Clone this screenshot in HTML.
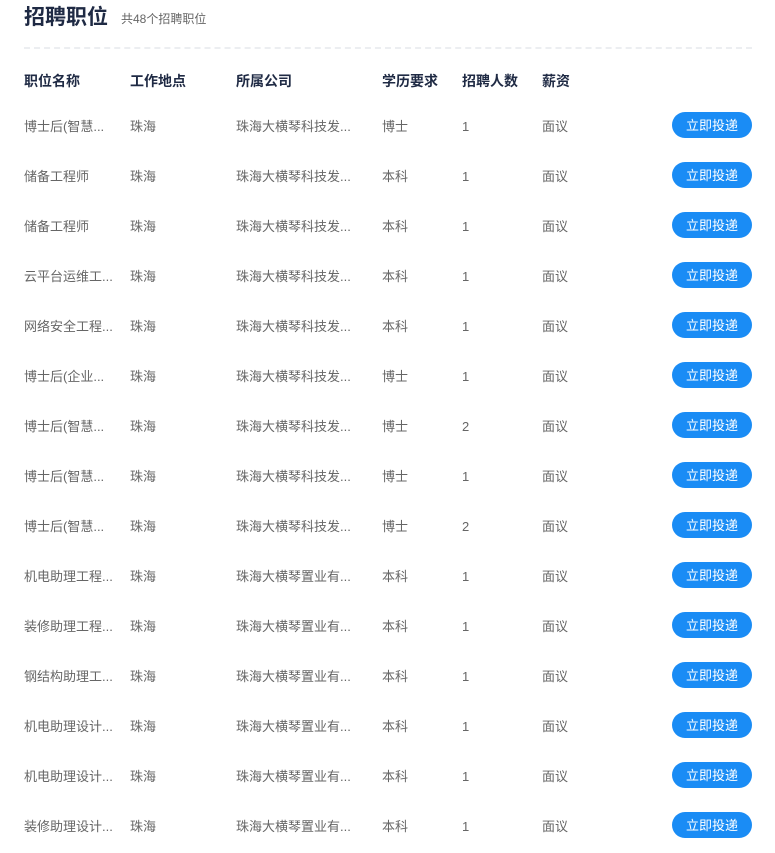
<!DOCTYPE html><html><head><meta charset="utf-8"><style>
body{margin:0;background:#fff;font-family:"Liberation Sans","Noto Sans CJK SC",sans-serif;}
.t{position:absolute;left:24px;top:4px;font-size:21px;line-height:28px;font-weight:bold;color:#1f2a44;}
.s{position:absolute;left:121px;top:11px;font-size:12px;line-height:16px;color:#666;}
.hr{position:absolute;left:24px;right:23px;top:47px;border-top:2px dashed #eceef1;}
.r{position:absolute;left:0;width:775px;height:20px;font-size:13px;color:#666;}
.r span{position:absolute;top:0;white-space:nowrap;line-height:20px;height:20px;}
.h{font-size:14px;font-weight:bold;color:#1f2a44;}
.b{position:absolute;left:672px;width:80px;height:26px;border-radius:13px;background:#1a8cf5;color:#fff;font-size:13px;text-align:center;line-height:27px;top:-5px;}
</style></head><body>
<div class="t">招聘职位</div><div class="s">共48个招聘职位</div><div class="hr"></div>
<div class="r h" style="top:71px"><span style="left:24px">职位名称</span><span style="left:130px">工作地点</span><span style="left:236px">所属公司</span><span style="left:382px">学历要求</span><span style="left:462px">招聘人数</span><span style="left:542px">薪资</span></div>
<div id="rows"></div>
<script>
var d=[["博士后(智慧...","珠海大横琴科技发...","博士",1],["储备工程师","珠海大横琴科技发...","本科",1],["储备工程师","珠海大横琴科技发...","本科",1],["云平台运维工...","珠海大横琴科技发...","本科",1],["网络安全工程...","珠海大横琴科技发...","本科",1],["博士后(企业...","珠海大横琴科技发...","博士",1],["博士后(智慧...","珠海大横琴科技发...","博士",2],["博士后(智慧...","珠海大横琴科技发...","博士",1],["博士后(智慧...","珠海大横琴科技发...","博士",2],["机电助理工程...","珠海大横琴置业有...","本科",1],["装修助理工程...","珠海大横琴置业有...","本科",1],["钢结构助理工...","珠海大横琴置业有...","本科",1],["机电助理设计...","珠海大横琴置业有...","本科",1],["机电助理设计...","珠海大横琴置业有...","本科",1],["装修助理设计...","珠海大横琴置业有...","本科",1]];
var h="";d.forEach(function(x,i){h+='<div class="r" style="top:'+(117+i*50)+'px"><span style="left:24px">'+x[0]+'</span><span style="left:130px">珠海</span><span style="left:236px">'+x[1]+'</span><span style="left:382px">'+x[2]+'</span><span style="left:462px">'+x[3]+'</span><span style="left:542px">面议</span><div class="b">立即投递</div></div>';});
document.getElementById("rows").innerHTML=h;
</script></body></html>
